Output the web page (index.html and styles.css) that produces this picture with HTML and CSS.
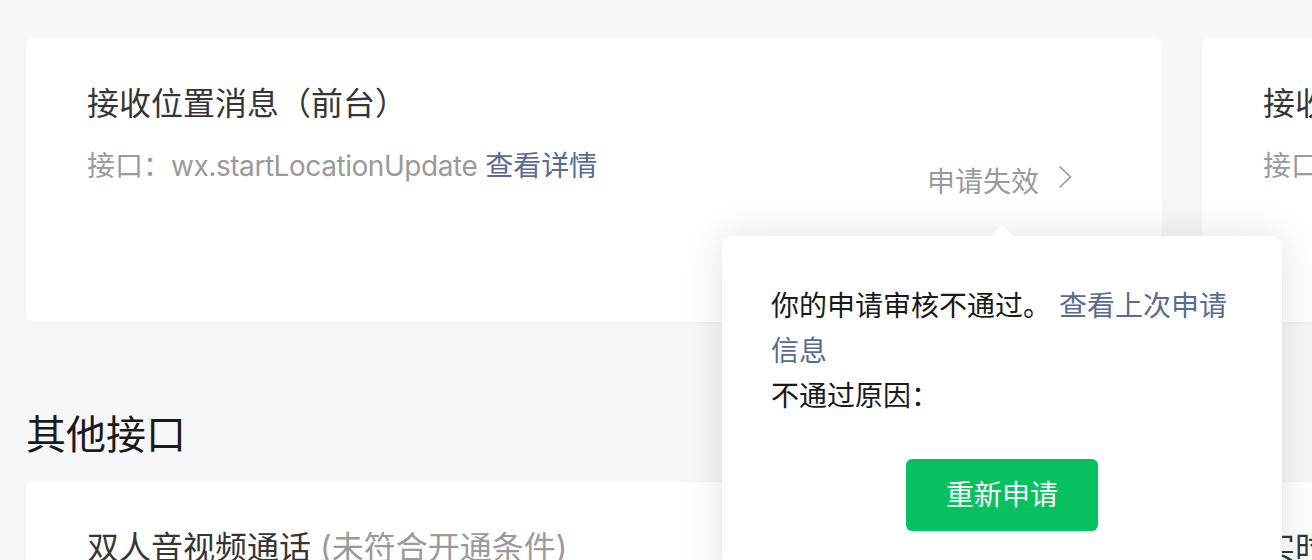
FILE: index.html
```html
<!DOCTYPE html>
<html lang="zh-CN">
<head>
<meta charset="utf-8">
<title>接口权限</title>
<link rel="stylesheet" href="styles.css">
</head>
<body>
<main class="page">
  <section class="grid">
    <div class="card">
      <div class="info">
        <div class="title">接收位置消息（前台）</div>
        <div class="desc">接口：<span class="api">wx.startLocationUpdate</span> <a class="link" href="#">查看详情</a></div>
      </div>
      <div class="status">
        <span>申请失效</span>
        <svg class="chev" width="14" height="24" viewBox="0 0 14 24"><path d="M1.5 1.5 L12.5 12 L1.5 22.5" fill="none" stroke="#9a9a9a" stroke-width="1.6"/></svg>
      </div>
    </div>
    <div class="card">
      <div class="info">
        <div class="title">接收位置消息（后台）</div>
        <div class="desc">接口：<span class="api">wx.startLocationUpdateBackground</span> <a class="link" href="#">查看详情</a></div>
      </div>
    </div>
  </section>

  <h2 class="section-title">其他接口</h2>

  <section class="grid">
    <div class="card">
      <div class="info">
        <div class="title">双人音视频通话 <span class="muted">(未符合开通条件)</span></div>
      </div>
    </div>
    <div class="card">
      <div class="info">
        <div class="title">实时语音通话 <span class="muted">(未符合开通条件)</span></div>
      </div>
    </div>
  </section>
</main>

<div class="popover">
  <p class="pop-text">你的申请审核不通过。 <a class="link" href="#">查看上次申请信息</a></p>
  <p class="pop-text">不通过原因：</p>
  <button class="btn-primary" type="button">重新申请</button>
</div>
</body>
</html>
```

FILE: styles.css
```css
html, body {
  margin: 0;
  padding: 0;
}

body {
  position: relative;
  width: 1312px;
  height: 560px;
  overflow: hidden;
  background: #f6f7f9;
  font-family: "Inter", "Noto Sans CJK SC", sans-serif;
  color: #353535;
}

.page {
  padding: 38px 0 0 26px;
}

.grid {
  display: grid;
  grid-template-columns: 1136px 1136px;
  column-gap: 40px;
}

.card {
  box-sizing: border-box;
  height: 284px;
  background: #fff;
  border-radius: 6px;
  box-shadow: 0 1px 3px rgba(0, 0, 0, 0.04);
  padding: 44px 90px 0 61px;
  display: flex;
  justify-content: space-between;
  align-items: flex-start;
}

.title {
  font-size: 32px;
  line-height: 44px;
  color: #353535;
  white-space: nowrap;
}

.muted {
  color: #9a9a9a;
}

.desc {
  margin-top: 20px;
  font-size: 28px;
  line-height: 40px;
  color: #9a9a9a;
  white-space: nowrap;
}

.api {
  letter-spacing: -0.45px;
}

.link {
  color: #576b95;
  text-decoration: none;
}

.status {
  margin-top: 80px;
  display: flex;
  align-items: center;
  gap: 19px;
  font-size: 28px;
  line-height: 40px;
  color: #9a9a9a;
}

.chev {
  display: block;
  margin-bottom: 10px;
}

.section-title {
  margin: 85px 0 19px;
  font-size: 40px;
  line-height: 56px;
  font-weight: normal;
  color: #1a1a1a;
}

.popover {
  position: absolute;
  left: 722px;
  top: 236px;
  box-sizing: border-box;
  width: 560px;
  height: 360px;
  padding: 48px 49px;
  background: #fff;
  border-radius: 10px;
  box-shadow: 0 0 40px rgba(0, 0, 0, 0.12);
}

.popover::before {
  content: "";
  position: absolute;
  top: -11px;
  left: 269px;
  width: 0;
  height: 0;
  border-left: 11px solid transparent;
  border-right: 11px solid transparent;
  border-bottom: 11px solid #fff;
}

.pop-text {
  margin: 0;
  font-size: 28px;
  line-height: 45px;
  color: #1a1a1a;
}

.btn-primary {
  display: block;
  margin: 40px auto 0;
  width: 192px;
  height: 72px;
  border: none;
  border-radius: 6px;
  background: #07c160;
  color: #fff;
  font-family: "Inter", "Noto Sans CJK SC", sans-serif;
  font-size: 28px;
  line-height: 72px;
  padding: 0;
}
```
